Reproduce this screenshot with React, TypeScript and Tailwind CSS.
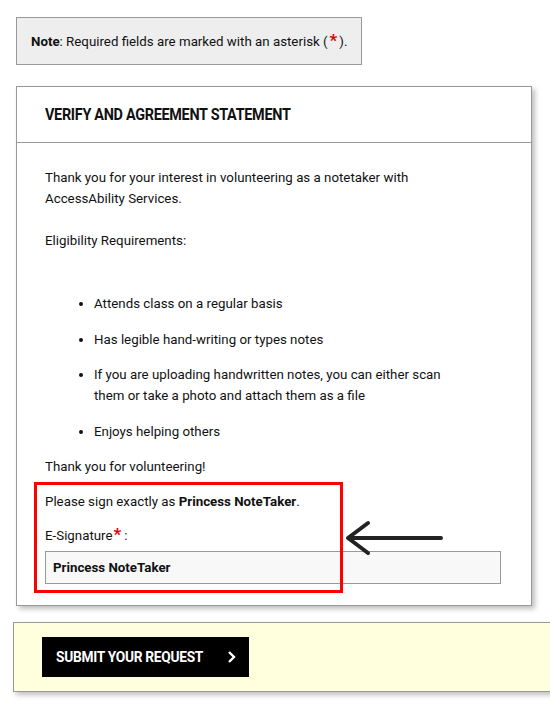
import React from "react";

export default function App() {
  const font = { fontFamily: "Roboto, 'Liberation Sans', sans-serif" };
  return (
    <div className="w-[550px] h-[725px] overflow-hidden bg-white text-[13.3px] text-[#111]" style={font}>
      <div className="pt-[17px] pl-[16px]">
        <div className="flex items-center h-[48px] w-[346px] px-[14px] border border-[#999] bg-[#eeeeee] whitespace-nowrap">
          <span className="leading-[21px]">
            <b>Note</b>: Required fields are marked with an asterisk (
            <span className="text-[#d00] font-bold text-[17px] mx-[2px]">*</span>
            ).
          </span>
        </div>
      </div>

      <div className="ml-[16px] mt-[21px] w-[516px] border border-[#999] bg-white shadow-[3px_3px_5px_rgba(0,0,0,0.25)]">
        <div className="h-[56px] flex items-center px-[28px] border-b border-[#999]">
          <h2 className="text-[16px] font-bold tracking-[-0.02em] origin-left scale-x-[0.9] whitespace-nowrap">
            VERIFY AND AGREEMENT STATEMENT
          </h2>
        </div>
        <div className="relative px-[28px] pt-[24px] pb-[21px] leading-[21px]">
          <p>
            Thank you for your interest in volunteering as a notetaker with
            <br />
            AccessAbility Services.
          </p>
          <p className="mt-[21px]">Eligibility Requirements:</p>
          <ul className="mt-[42px] pl-[49px] list-disc">
            <li>Attends class on a regular basis</li>
            <li className="mt-[15px]">Has legible hand-writing or types notes</li>
            <li className="mt-[14px]">
              If you are uploading handwritten notes, you can either scan
              <br />
              them or take a photo and attach them as a file
            </li>
            <li className="mt-[15px]">Enjoys helping others</li>
          </ul>
          <p className="mt-[14px]">Thank you for volunteering!</p>
          <p className="mt-[14px]">
            Please sign exactly as <b>Princess NoteTaker</b>.
          </p>
          <p className="mt-[13px] flex items-start">
            E-Signature
            <span className="text-[#d00] font-bold text-[17px] leading-[18px] ml-[1px]">*</span>
            <span className="ml-[3px]">:</span>
          </p>
          <div className="mt-[5px] w-[456px] h-[33px] border border-[#999] bg-[#f8f8f8] flex items-center px-[7px] font-bold">
            Princess NoteTaker
          </div>

          <div className="absolute left-[17px] top-[339px] w-[309px] h-[111px] border-[3px] border-[#f00] pointer-events-none" />
          <svg
            className="absolute left-[325px] top-[375px]"
            width="104"
            height="40"
            viewBox="0 0 104 40"
            fill="none"
          >
            <path
              d="M6 20 H99 M26 5 L6 20 L26 35"
              stroke="#222"
              strokeWidth="4"
              strokeLinecap="round"
              strokeLinejoin="round"
            />
          </svg>
        </div>
      </div>

      <div className="ml-[13px] mt-[16px] w-[545px] h-[70px] border border-[#999] bg-[#ffffdd] shadow-[3px_3px_5px_rgba(0,0,0,0.25)] flex items-center pl-[28px]">
        <button className="h-[40px] w-[207px] bg-black text-white flex items-center pl-[14px]">
          <span className="font-bold text-[14px] tracking-[-0.02em] origin-left scale-x-[0.98] whitespace-nowrap">
            SUBMIT YOUR REQUEST
          </span>
          <svg className="ml-auto mr-[12px]" width="10" height="14" viewBox="0 0 10 14" fill="none">
            <path d="M2 2 L7 7 L2 12" stroke="white" strokeWidth="2.4" />
          </svg>
        </button>
      </div>
    </div>
  );
}
